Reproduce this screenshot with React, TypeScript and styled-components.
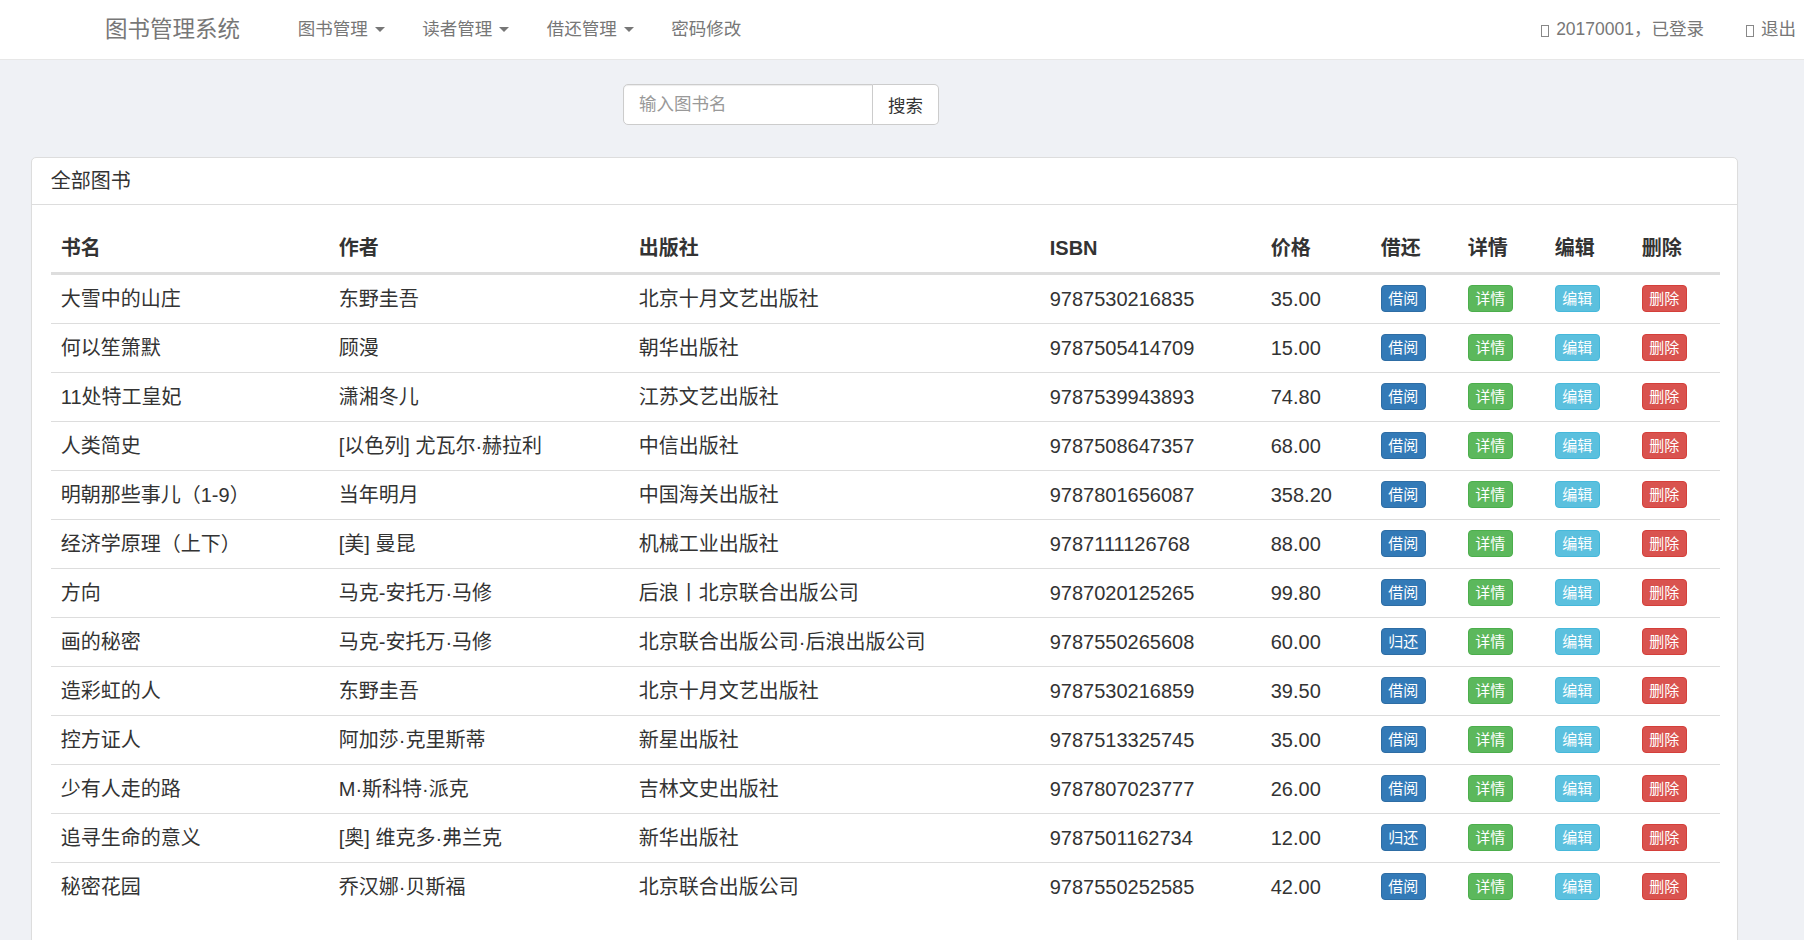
import React from "react";
import styled, { createGlobalStyle } from "styled-components";

const GlobalStyle = createGlobalStyle`
  * {
    box-sizing: border-box;
  }
  html,
  body {
    margin: 0;
    padding: 0;
  }
  body {
    background-color: #eff1f5;
    color: #333;
    font-family: "Liberation Sans", "Noto Sans CJK SC", sans-serif;
    font-size: 17.5px;
  }
`;

const Navbar = styled.nav`
  height: 60px;
  background-color: #fff;
  border-bottom: 1px solid #e7e7e7;
  display: flex;
  align-items: center;
  padding: 0 8px 0 105px;
`;

const Brand = styled.a`
  font-size: 22.5px;
  line-height: 30px;
  color: #777;
  margin-right: 39px;
  cursor: pointer;
`;

const NavList = styled.ul`
  display: flex;
  align-items: center;
  list-style: none;
  margin: 0;
  padding: 0;
  height: 100%;
`;

const NavItem = styled.li`
  display: flex;
  align-items: center;
  padding: 0 18.75px;
  color: #777;
  font-size: 17.5px;
  line-height: 25px;
  cursor: pointer;
`;

const Caret = styled.span`
  display: inline-block;
  width: 0;
  height: 0;
  margin-left: 7px;
  border-top: 5px solid #777;
  border-left: 5px solid transparent;
  border-right: 5px solid transparent;
`;

const RightNav = styled.ul`
  display: flex;
  align-items: center;
  gap: 42px;
  list-style: none;
  margin: 0 0 0 auto;
  padding: 0;
`;

const RightItem = styled.li`
  display: flex;
  align-items: center;
  color: #777;
  font-size: 17.5px;
  line-height: 25px;
  cursor: pointer;
`;

// glyphicon font is missing on the original page, so the icons show as empty boxes
const MissingGlyph = styled.span`
  display: inline-block;
  width: 8px;
  height: 12px;
  border: 1px solid #888;
  margin: 2px 7px 0 0;
`;

const SearchForm = styled.form`
  display: flex;
  margin: 24px 0 32px;
  padding-left: 623px;
`;

const SearchInput = styled.input`
  width: 250px;
  height: 41px;
  padding: 0 15px;
  border: 1px solid #ccc;
  border-radius: 5px 0 0 5px;
  box-shadow: inset 0 1px 1px rgba(0, 0, 0, 0.075);
  font-family: inherit;
  font-size: 17.5px;
  color: #555;
  outline: none;

  &::placeholder {
    color: #999;
  }
`;

const SearchButton = styled.button`
  height: 41px;
  padding: 0 15px;
  border: 1px solid #ccc;
  border-left: 0;
  border-radius: 0 5px 5px 0;
  background-color: #fff;
  font-family: inherit;
  font-size: 17.5px;
  color: #333;
  cursor: pointer;
`;

const Main = styled.main`
  padding: 0 66px 20px 31px;
`;

const Panel = styled.section`
  background-color: #fff;
  border: 1px solid #ddd;
  border-radius: 5px;
  box-shadow: 0 1px 1px rgba(0, 0, 0, 0.05);
`;

const PanelHeading = styled.div`
  padding: 12.5px 18.75px;
  border-bottom: 1px solid #ddd;
  font-size: 20px;
  line-height: 21px;
  color: #333;
`;

const PanelBody = styled.div`
  padding: 18.75px 18.75px 40px;
`;

const Table = styled.table`
  width: 100%;
  table-layout: fixed;
  border-collapse: separate;
  border-spacing: 0;
  font-size: 20px;
`;

const Th = styled.th<{ $width: number }>`
  width: ${(p) => p.$width}px;
  text-align: left;
  padding: 10px;
  line-height: 28px;
  font-weight: bold;
  border-bottom: 2px solid #ddd;
  white-space: nowrap;
`;

const Td = styled.td`
  padding: 10px;
  line-height: 28px;
  border-top: 1px solid #ddd;
  vertical-align: top;
  white-space: nowrap;
`;

type Variant = "primary" | "success" | "info" | "danger";

const variantColors: Record<Variant, { bg: string; border: string }> = {
  primary: { bg: "#337ab7", border: "#2e6da4" },
  success: { bg: "#5cb85c", border: "#4cae4c" },
  info: { bg: "#5bc0de", border: "#46b8da" },
  danger: { bg: "#d9534f", border: "#d43f3a" },
};

const SmallButton = styled.button<{ $variant: Variant }>`
  display: inline-block;
  vertical-align: top;
  height: 27px;
  padding: 0 6.5px;
  font-family: inherit;
  font-size: 15px;
  line-height: 25px;
  color: #fff;
  background-color: ${(p) => variantColors[p.$variant].bg};
  border: 1px solid ${(p) => variantColors[p.$variant].border};
  border-radius: 4px;
  cursor: pointer;
`;

const columns = [
  { label: "书名", width: 278 },
  { label: "作者", width: 300 },
  { label: "出版社", width: 411 },
  { label: "ISBN", width: 221 },
  { label: "价格", width: 110 },
  { label: "借还", width: 87 },
  { label: "详情", width: 87 },
  { label: "编辑", width: 87 },
  { label: "删除", width: 88 },
];

type Book = {
  name: string;
  author: string;
  publisher: string;
  isbn: string;
  price: string;
  lent: boolean;
};

const books: Book[] = [
  { name: "大雪中的山庄", author: "东野圭吾", publisher: "北京十月文艺出版社", isbn: "9787530216835", price: "35.00", lent: false },
  { name: "何以笙箫默", author: "顾漫", publisher: "朝华出版社", isbn: "9787505414709", price: "15.00", lent: false },
  { name: "11处特工皇妃", author: "潇湘冬儿", publisher: "江苏文艺出版社", isbn: "9787539943893", price: "74.80", lent: false },
  { name: "人类简史", author: "[以色列] 尤瓦尔·赫拉利", publisher: "中信出版社", isbn: "9787508647357", price: "68.00", lent: false },
  { name: "明朝那些事儿（1-9）", author: "当年明月", publisher: "中国海关出版社", isbn: "9787801656087", price: "358.20", lent: false },
  { name: "经济学原理（上下）", author: "[美] 曼昆", publisher: "机械工业出版社", isbn: "9787111126768", price: "88.00", lent: false },
  { name: "方向", author: "马克-安托万·马修", publisher: "后浪丨北京联合出版公司", isbn: "9787020125265", price: "99.80", lent: false },
  { name: "画的秘密", author: "马克-安托万·马修", publisher: "北京联合出版公司·后浪出版公司", isbn: "9787550265608", price: "60.00", lent: true },
  { name: "造彩虹的人", author: "东野圭吾", publisher: "北京十月文艺出版社", isbn: "9787530216859", price: "39.50", lent: false },
  { name: "控方证人", author: "阿加莎·克里斯蒂", publisher: "新星出版社", isbn: "9787513325745", price: "35.00", lent: false },
  { name: "少有人走的路", author: "M·斯科特·派克", publisher: "吉林文史出版社", isbn: "9787807023777", price: "26.00", lent: false },
  { name: "追寻生命的意义", author: "[奥] 维克多·弗兰克", publisher: "新华出版社", isbn: "9787501162734", price: "12.00", lent: true },
  { name: "秘密花园", author: "乔汉娜·贝斯福", publisher: "北京联合出版公司", isbn: "9787550252585", price: "42.00", lent: false },
];

const App: React.FC = () => {
  return (
    <>
      <GlobalStyle />
      <Navbar>
        <Brand>图书管理系统</Brand>
        <NavList>
          <NavItem>
            图书管理 <Caret />
          </NavItem>
          <NavItem>
            读者管理 <Caret />
          </NavItem>
          <NavItem>
            借还管理 <Caret />
          </NavItem>
          <NavItem>密码修改</NavItem>
        </NavList>
        <RightNav>
          <RightItem>
            <MissingGlyph />
            20170001，已登录
          </RightItem>
          <RightItem>
            <MissingGlyph />
            退出
          </RightItem>
        </RightNav>
      </Navbar>

      <SearchForm onSubmit={(e) => e.preventDefault()}>
        <SearchInput type="text" placeholder="输入图书名" />
        <SearchButton type="submit">搜索</SearchButton>
      </SearchForm>

      <Main>
        <Panel>
          <PanelHeading>全部图书</PanelHeading>
          <PanelBody>
            <Table>
              <thead>
                <tr>
                  {columns.map((c) => (
                    <Th key={c.label} $width={c.width}>
                      {c.label}
                    </Th>
                  ))}
                </tr>
              </thead>
              <tbody>
                {books.map((b) => (
                  <tr key={b.isbn}>
                    <Td>{b.name}</Td>
                    <Td>{b.author}</Td>
                    <Td>{b.publisher}</Td>
                    <Td>{b.isbn}</Td>
                    <Td>{b.price}</Td>
                    <Td>
                      <SmallButton $variant="primary">
                        {b.lent ? "归还" : "借阅"}
                      </SmallButton>
                    </Td>
                    <Td>
                      <SmallButton $variant="success">详情</SmallButton>
                    </Td>
                    <Td>
                      <SmallButton $variant="info">编辑</SmallButton>
                    </Td>
                    <Td>
                      <SmallButton $variant="danger">删除</SmallButton>
                    </Td>
                  </tr>
                ))}
              </tbody>
            </Table>
          </PanelBody>
        </Panel>
      </Main>
    </>
  );
};

export default App;
